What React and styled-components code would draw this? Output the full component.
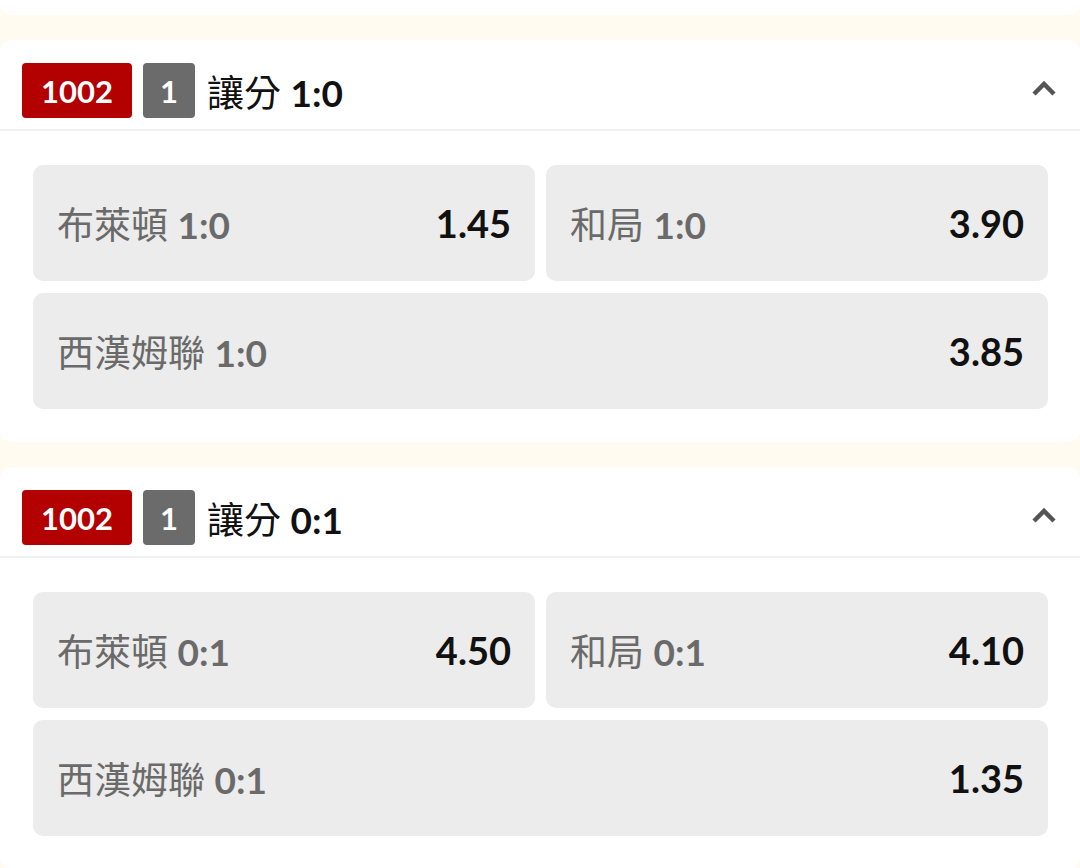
import React from 'react';
import styled, { createGlobalStyle } from 'styled-components';

const GlobalStyle = createGlobalStyle`
  body {
    margin: 0;
    background: #fffbf0;
    font-family: Lato, "Noto Sans CJK TC", sans-serif;
  }
`;

// 페이지 전체
const Page = styled.div`
  display: flex;
  flex-direction: column;
  gap: 25px;
`;

// 위에서 잘린 이전 카드
const PrevCard = styled.div`
  height: 15px;
  background: #fff;
  border-radius: 0 0 12px 12px;
`;

const Card = styled.section`
  background: #fff;
  border-radius: 12px;
`;

const Header = styled.div`
  display: flex;
  align-items: center;
  padding: 23px 22px 11px;
  border-bottom: 2px solid #f1f1f1;
`;

const Badge = styled.span`
  height: 55px;
  min-width: ${(p) => (p.$wide ? '110px' : '52px')};
  padding: 0 10px;
  box-sizing: border-box;
  display: inline-flex;
  align-items: center;
  justify-content: center;
  margin-right: 11px;
  border-radius: 4px;
  background: ${(p) => p.$bg};
  color: #fff;
  font-size: 31px;
  font-weight: 700;
`;

const Title = styled.span`
  font-size: 37px;
  color: #111;
  margin-left: 1px;
  b {
    font-weight: 700;
  }
`;

const Chevron = styled.svg`
  margin-left: auto;
  margin-right: 1px;
  margin-top: -6px;
  width: 26px;
  height: 18px;
`;

const Body = styled.div`
  display: grid;
  grid-template-columns: 1fr 1fr;
  gap: 12px 11px;
  padding: 34px 32px 33px 33px;
`;

const Option = styled.div`
  grid-column: ${(p) => (p.$full ? '1 / -1' : 'auto')};
  height: 116px;
  display: flex;
  align-items: center;
  justify-content: space-between;
  padding: 0 24px;
  background: #ececec;
  border-radius: 10px;
`;

const Label = styled.span`
  font-size: 37px;
  color: #6a6a6a;
  b {
    font-weight: 700;
  }
`;

const Odds = styled.span`
  font-size: 38px;
  font-weight: 700;
  color: #111;
`;

const markets = [
  {
    score: '1:0',
    options: [
      { team: '布萊頓', odds: '1.45' },
      { team: '和局', odds: '3.90' },
      { team: '西漢姆聯', odds: '3.85', full: true },
    ],
  },
  {
    score: '0:1',
    options: [
      { team: '布萊頓', odds: '4.50' },
      { team: '和局', odds: '4.10' },
      { team: '西漢姆聯', odds: '1.35', full: true },
    ],
  },
];

function App() {
  return (
    <Page>
      <GlobalStyle />
      <PrevCard />
      {markets.map((m) => (
        <Card key={m.score}>
          <Header>
            <Badge $wide $bg="#b30000">1002</Badge>
            <Badge $bg="#6b6b6b">1</Badge>
            <Title>
              讓分 <b>{m.score}</b>
            </Title>
            <Chevron viewBox="0 0 26 18">
              <path d="M3 15 L13 5 L23 15" fill="none" stroke="#555" strokeWidth="4.5" />
            </Chevron>
          </Header>
          <Body>
            {m.options.map((o) => (
              <Option key={o.team} $full={o.full}>
                <Label>
                  {o.team} <b>{m.score}</b>
                </Label>
                <Odds>{o.odds}</Odds>
              </Option>
            ))}
          </Body>
        </Card>
      ))}
    </Page>
  );
}

export default App;
